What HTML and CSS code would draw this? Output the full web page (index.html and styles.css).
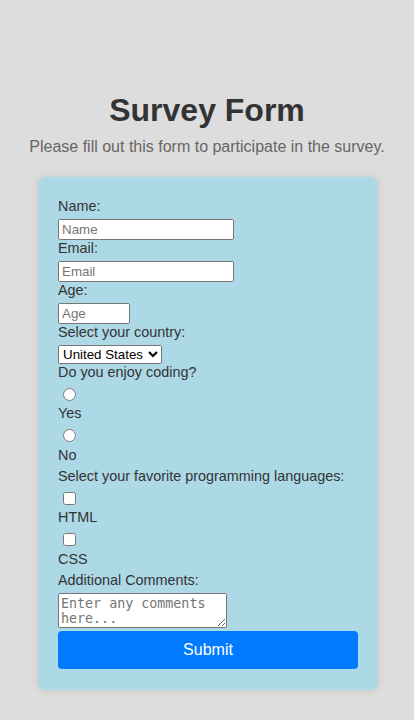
FILE: index.html
```html
<!DOCTYPE html>
<html lang="en">
<head>
<meta charset="utf-8">
<title>Survey Form</title>
<link rel="stylesheet" href="styles.css">
</head>
<body>
<main class="page">
  <h1 class="title">Survey Form</h1>
  <p class="subtitle">Please fill out this form to participate in the survey.</p>
  <form class="survey">
    <label class="lbl" for="name">Name:</label>
    <input class="text-field" type="text" id="name" placeholder="Name">
    <label class="lbl" for="email">Email:</label>
    <input class="text-field" type="email" id="email" placeholder="Email">
    <label class="lbl" for="age">Age:</label>
    <input class="age-field" type="number" id="age" placeholder="Age">
    <label class="lbl" for="country">Select your country:</label>
    <select class="country" id="country">
      <option>United States</option>
      <option>Canada</option>
      <option>Mexico</option>
    </select>
    <label class="lbl">Do you enjoy coding?</label>
    <input class="choice" type="radio" name="coding" id="yes" value="yes">
    <label class="lbl" for="yes">Yes</label>
    <input class="choice" type="radio" name="coding" id="no" value="no">
    <label class="lbl" for="no">No</label>
    <label class="lbl">Select your favorite programming languages:</label>
    <input class="choice" type="checkbox" id="html" value="html">
    <label class="lbl" for="html">HTML</label>
    <input class="choice" type="checkbox" id="css" value="css">
    <label class="lbl" for="css">CSS</label>
    <label class="lbl" for="comments">Additional Comments:</label>
    <textarea class="comments" id="comments" placeholder="Enter any comments here..."></textarea>
    <button class="submit" type="submit">Submit</button>
  </form>
</main>
</body>
</html>
```
FILE: styles.css
```css
html, body {
  margin: 0;
  padding: 0;
  background: #dddddd;
  font-family: "Liberation Sans", Arial, sans-serif;
}

.page {
  padding-top: 92px;
  padding-bottom: 31px;
}

.title {
  margin: 0 0 9px;
  text-align: center;
  font-size: 32px;
  font-weight: bold;
  color: #333333;
}

.subtitle {
  margin: 0 0 21px;
  text-align: center;
  font-size: 16px;
  color: #666666;
}

.survey {
  width: 340px;
  box-sizing: border-box;
  margin: 0 0 0 38px;
  padding: 21px 20px 21px;
  background: #add8e6;
  border-radius: 8px;
  box-shadow: 0 0 10px rgba(0, 0, 0, 0.1);
  font-size: 14.4px;
  color: #333333;
}

.lbl {
  display: block;
  margin-bottom: 5px;
}

.choice {
  margin: 3px 3px 4.4px 5px;
}

.text-field,
.age-field {
  box-sizing: border-box;
  height: 21px;
  font-family: "Liberation Sans", Arial, sans-serif;
  font-size: 13.333px;
}

.text-field {
  width: 176px;
}

.age-field {
  width: 72px;
}

.country {
  width: 104px;
  font-family: "Liberation Sans", Arial, sans-serif;
  font-size: 13.333px;
}

.comments {
  box-sizing: border-box;
  width: 169px;
  height: 35px;
  font-family: "DejaVu Sans Mono", monospace;
  font-size: 13.333px;
}

.submit {
  display: block;
  width: 100%;
  padding: 10px;
  border: none;
  border-radius: 4px;
  background: #007bff;
  color: #ffffff;
  font-family: "Liberation Sans", Arial, sans-serif;
  font-size: 16px;
  cursor: pointer;
}
```
